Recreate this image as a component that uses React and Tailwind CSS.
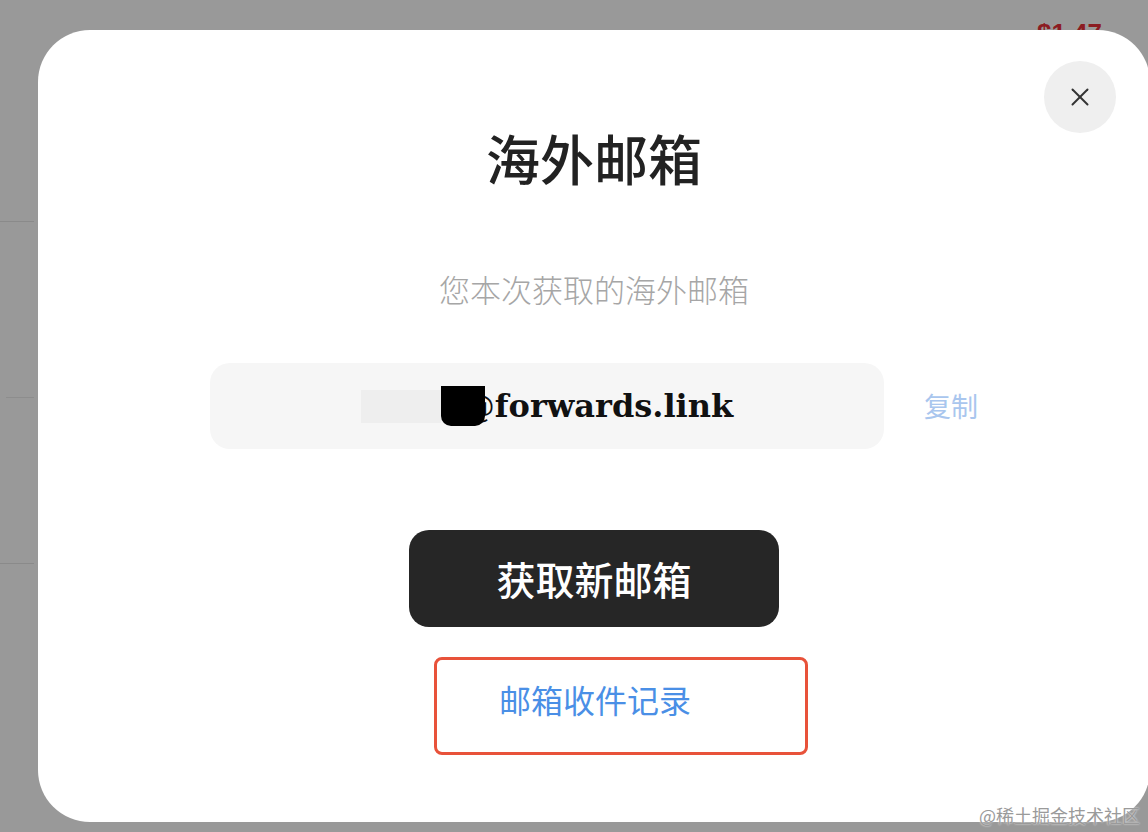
import { X } from "lucide-react";

const cjk = { fontFamily: '"Noto Sans CJK SC", "Noto Sans", sans-serif' };

function PageBehind() {
  return (
    <>
      <div className="absolute left-0 top-[221px] w-[34px] h-px bg-[#8a8a8a]" />
      <div className="absolute left-[6px] top-[397px] w-[28px] h-px bg-[#8d8d8d]" />
      <div className="absolute left-0 top-[563px] w-[34px] h-px bg-[#8a8a8a]" />
      <div className="absolute right-[46px] top-[14px] text-[26px] font-bold text-[#8c1c22]" style={{ fontFamily: '"Liberation Sans", sans-serif' }}>
        $1.47
      </div>
    </>
  );
}

export default function App() {
  return (
    <div className="relative w-[1148px] h-[832px] overflow-hidden bg-[#999999] pl-[38px] pt-[30px]" style={cjk}>
      <PageBehind />

      <div className="relative z-10 w-[1112px] h-[792px] bg-white rounded-[52px] flex flex-col items-center">
        <button className="absolute right-[34px] top-[31px] w-[72px] h-[72px] rounded-full bg-[#efefef] flex items-center justify-center text-[#333]">
          <X size={30} strokeWidth={1.6} />
        </button>

        <h1 className="mt-[100px] text-[54px] leading-[56px] font-medium text-[#222]">海外邮箱</h1>

        <p className="mt-[87px] text-[31px] leading-[32px] font-light text-[#a6a6a6]">您本次获取的海外邮箱</p>

        <div className="mt-[58px] flex items-center gap-[40px]">
          <div className="w-[674px] h-[86px] rounded-[20px] bg-[#f6f6f6] flex items-center justify-center">
            <div className="w-[80px] h-[33px] bg-[#eeeeee]" />
            <div className="relative z-10 w-[44px] h-[40px] bg-black rounded-b-[10px]" />
            <span
              className="-ml-[22px] text-[32px] font-bold text-[#111] leading-none"
              style={{ fontFamily: '"DejaVu Serif", "Liberation Serif", serif' }}
            >
              @forwards.link
            </span>
          </div>
          <span className="text-[27px] text-[#a9c6ee]">复制</span>
        </div>

        <button className="mt-[81px] w-[370px] h-[97px] rounded-[20px] bg-[#262626] text-white text-[39px] font-medium">
          获取新邮箱
        </button>

        <div className="mt-[30px] ml-[54px] w-[374px] h-[98px] border-[3px] border-[#e8523a] rounded-[8px] flex items-center pl-[62px] pb-[14px]">
          <span className="text-[32px] text-[#4a8fe6]">邮箱收件记录</span>
        </div>
      </div>

      <div className="absolute z-20 right-[8px] bottom-[3px] text-[18px] text-[#9a9a9a]" style={{ fontFamily: '"Noto Sans CJK SC", serif', textShadow: "0 0 2px #fff" }}>
        @稀土掘金技术社区
      </div>
    </div>
  );
}
